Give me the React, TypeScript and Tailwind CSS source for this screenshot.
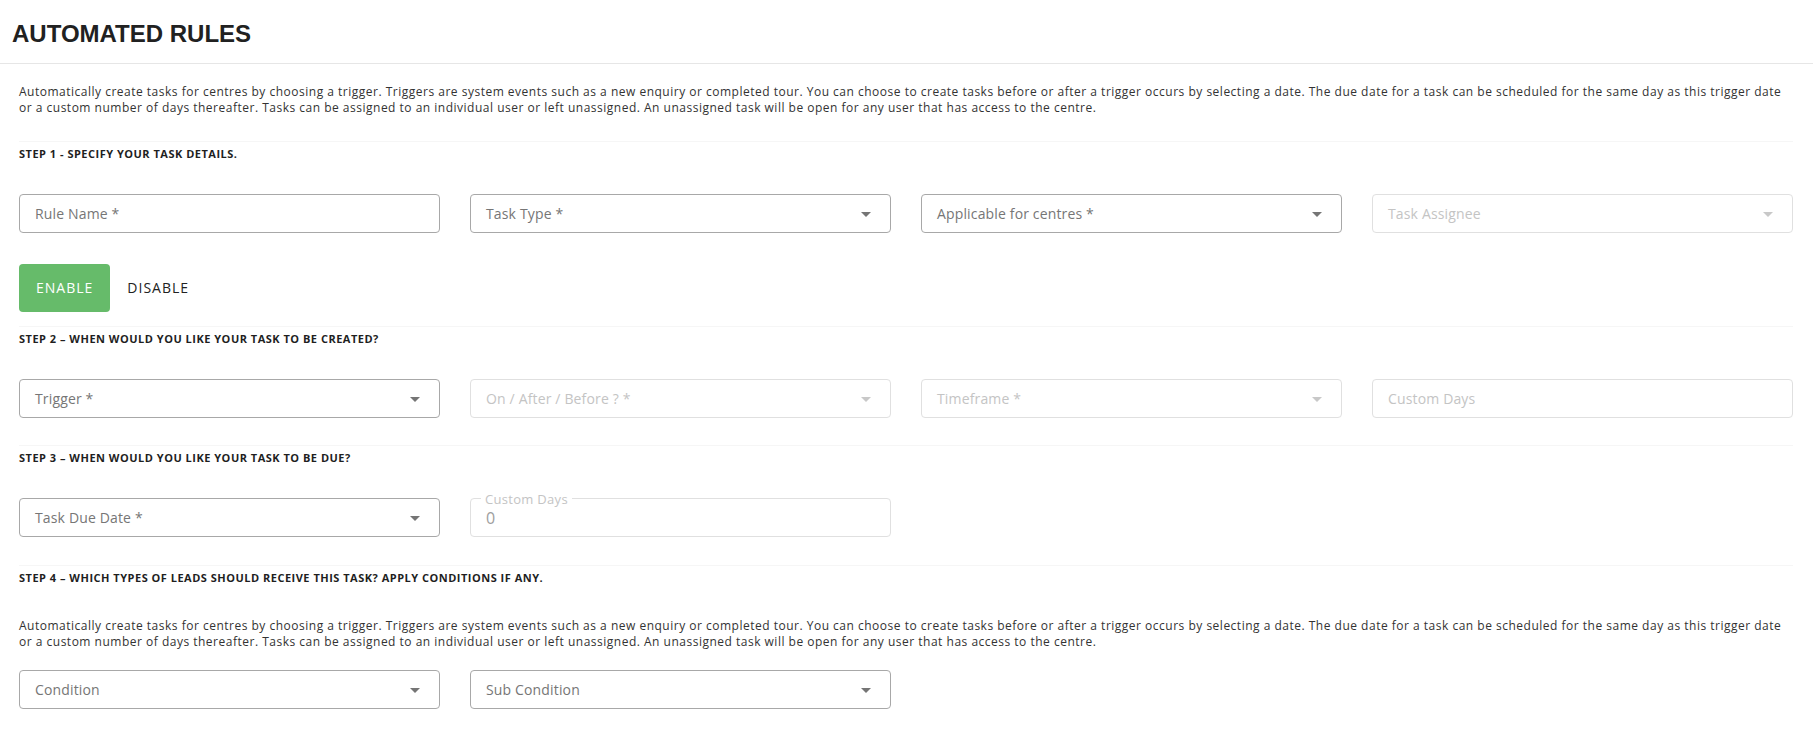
import React from "react";

const INTRO_1 =
  "Automatically create tasks for centres by choosing a trigger. Triggers are system events such as a new enquiry or completed tour. You can choose to create tasks before or after a trigger occurs by selecting a date. The due date for a task can be scheduled for the same day as this trigger date";
const INTRO_2 =
  "or a custom number of days thereafter. Tasks can be assigned to an individual user or left unassigned. An unassigned task will be open for any user that has access to the centre.";

const ArrowDrop = ({ disabled }: { disabled?: boolean }) => (
  <svg
    viewBox="0 0 24 24"
    className={`h-6 w-6 shrink-0 ${disabled ? "fill-[#c8c8c8]" : "fill-[#757575]"}`}
  >
    <path d="M7 10l5 5 5-5z" />
  </svg>
);

type FieldProps = { label: string; select?: boolean; disabled?: boolean };

const Field = ({ label, select, disabled }: FieldProps) => (
  <div
    className={`flex h-[39px] items-center justify-between rounded border bg-white pl-[15px] pr-3 ${
      disabled ? "border-[#e0e0e0]" : "border-[#a8a8a8]"
    }`}
  >
    <span className={`text-sm tracking-[0.15px] ${disabled ? "text-[#c4c4c4]" : "text-[#767676]"}`}>{label}</span>
    {select && <ArrowDrop disabled={disabled} />}
  </div>
);

const StepTitle = ({ children }: { children: React.ReactNode }) => (
  <h2 className="text-[11px] leading-4 font-bold tracking-[0.5px] text-[#1f1f1f] uppercase">{children}</h2>
);

const Intro = () => (
  <p className="text-xs leading-4 tracking-[0.5px] text-[#333]">
    {INTRO_1}
    <br />
    {INTRO_2}
  </p>
);

export default function App() {
  return (
    <div className="min-h-screen bg-white font-['Open_Sans',sans-serif] text-[#222]">
      <header className="border-b border-[#e6e6e6] px-3 pt-5 pb-[15px]">
        <h1 className="font-['Liberation_Sans',Arial,sans-serif] text-2xl leading-7 font-bold text-[#212121]">
          AUTOMATED RULES
        </h1>
      </header>

      <main className="pl-[19px] pr-5">
        <div className="pt-5">
          <Intro />
        </div>

        {/* step 1 */}
        <section className="mt-[25px] border-t border-[#f6f6f6] pt-1">
          <StepTitle>Step 1 - Specify your task details.</StepTitle>
          <div className="mt-8 grid grid-cols-4 gap-x-[30px]">
            <Field label="Rule Name *" />
            <Field label="Task Type *" select />
            <Field label="Applicable for centres *" select />
            <Field label="Task Assignee" select disabled />
          </div>
          <div className="mt-[31px] flex">
            <button className="h-12 rounded bg-[#66bb6a] px-[17px] text-sm font-medium tracking-[1px] text-white">
              ENABLE
            </button>
            <button className="h-12 rounded bg-white px-[17px] text-sm font-medium tracking-[1px] text-[#222]">
              DISABLE
            </button>
          </div>
        </section>

        {/* step 2 */}
        <section className="mt-[14px] border-t border-[#f6f6f6] pt-1">
          <StepTitle>Step 2 – When would you like your task to be created?</StepTitle>
          <div className="mt-8 grid grid-cols-4 gap-x-[30px]">
            <Field label="Trigger *" select />
            <Field label="On / After / Before ? *" select disabled />
            <Field label="Timeframe *" select disabled />
            <Field label="Custom Days" disabled />
          </div>
        </section>

        {/* step 3 */}
        <section className="mt-[27px] border-t border-[#f6f6f6] pt-1">
          <StepTitle>Step 3 – When would you like your task to be due?</StepTitle>
          <div className="mt-8 grid grid-cols-4 gap-x-[30px]">
            <Field label="Task Due Date *" select />
            <div className="relative flex h-[39px] items-center rounded border border-[#e0e0e0] pl-[15px]">
              <span className="absolute -top-[10px] left-[10px] bg-white px-1 text-[13px] leading-5 tracking-[0.3px] text-[#c4c4c4]">
                Custom Days
              </span>
              <span className="text-base text-[#9e9e9e]">0</span>
            </div>
          </div>
        </section>

        {/* step 4 */}
        <section className="mt-[28px] border-t border-[#f6f6f6] pt-1">
          <StepTitle>Step 4 – Which types of leads should receive this task? Apply conditions if any.</StepTitle>
          <div className="mt-8">
            <Intro />
          </div>
          <div className="mt-5 grid grid-cols-4 gap-x-[30px]">
            <Field label="Condition" select />
            <Field label="Sub Condition" select />
          </div>
        </section>
      </main>
    </div>
  );
}
